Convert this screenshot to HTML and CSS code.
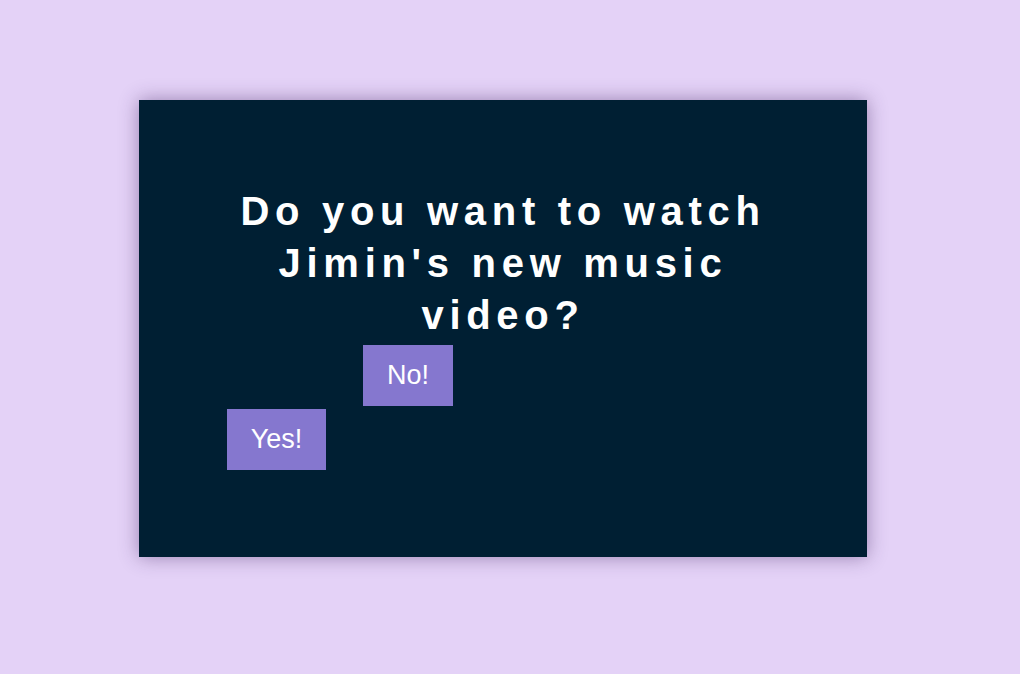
FILE: index.html
```html
<!DOCTYPE html>
<html lang="en">
<head>
<meta charset="utf-8">
<title>Question</title>
<link rel="stylesheet" href="styles.css">
</head>
<body>
  <main class="card">
    <h1 class="question">Do you want to watch Jimin's new music video?</h1>
    <div class="choices">
      <button class="btn btn-no">No!</button>
      <button class="btn btn-yes">Yes!</button>
    </div>
  </main>
</body>
</html>
```

FILE: styles.css
```css
html, body {
  margin: 0;
  padding: 0;
}

body {
  background: #e4d2f7;
  width: 1020px;
  height: 674px;
  overflow: hidden;
  font-family: "Liberation Sans", Arial, sans-serif;
}

.card {
  box-sizing: border-box;
  width: 728px;
  height: 457px;
  margin: 100px 0 0 139px;
  background: #001f33;
  box-shadow: 0 0 18px rgba(60, 30, 90, 0.45);
  padding-top: 85px;
  display: flex;
  flex-direction: column;
}

.question {
  margin: 0 auto;
  width: 580px;
  color: #ffffff;
  font-size: 40px;
  font-weight: 700;
  line-height: 52px;
  letter-spacing: 5.7px;
  text-align: center;
}

.choices {
  display: flex;
  flex-direction: column;
  align-items: flex-start;
  gap: 3px;
  padding-top: 4px;
  padding-left: 88px;
}

.btn {
  border: none;
  background: #8577cf;
  color: #ffffff;
  font-family: "Liberation Sans", Arial, sans-serif;
  font-size: 27px;
  line-height: 31px;
  padding: 15px 0;
  margin: 0;
  cursor: pointer;
}

.btn-no {
  width: 90px;
  margin-left: 136px;
}

.btn-yes {
  width: 99px;
}
```
